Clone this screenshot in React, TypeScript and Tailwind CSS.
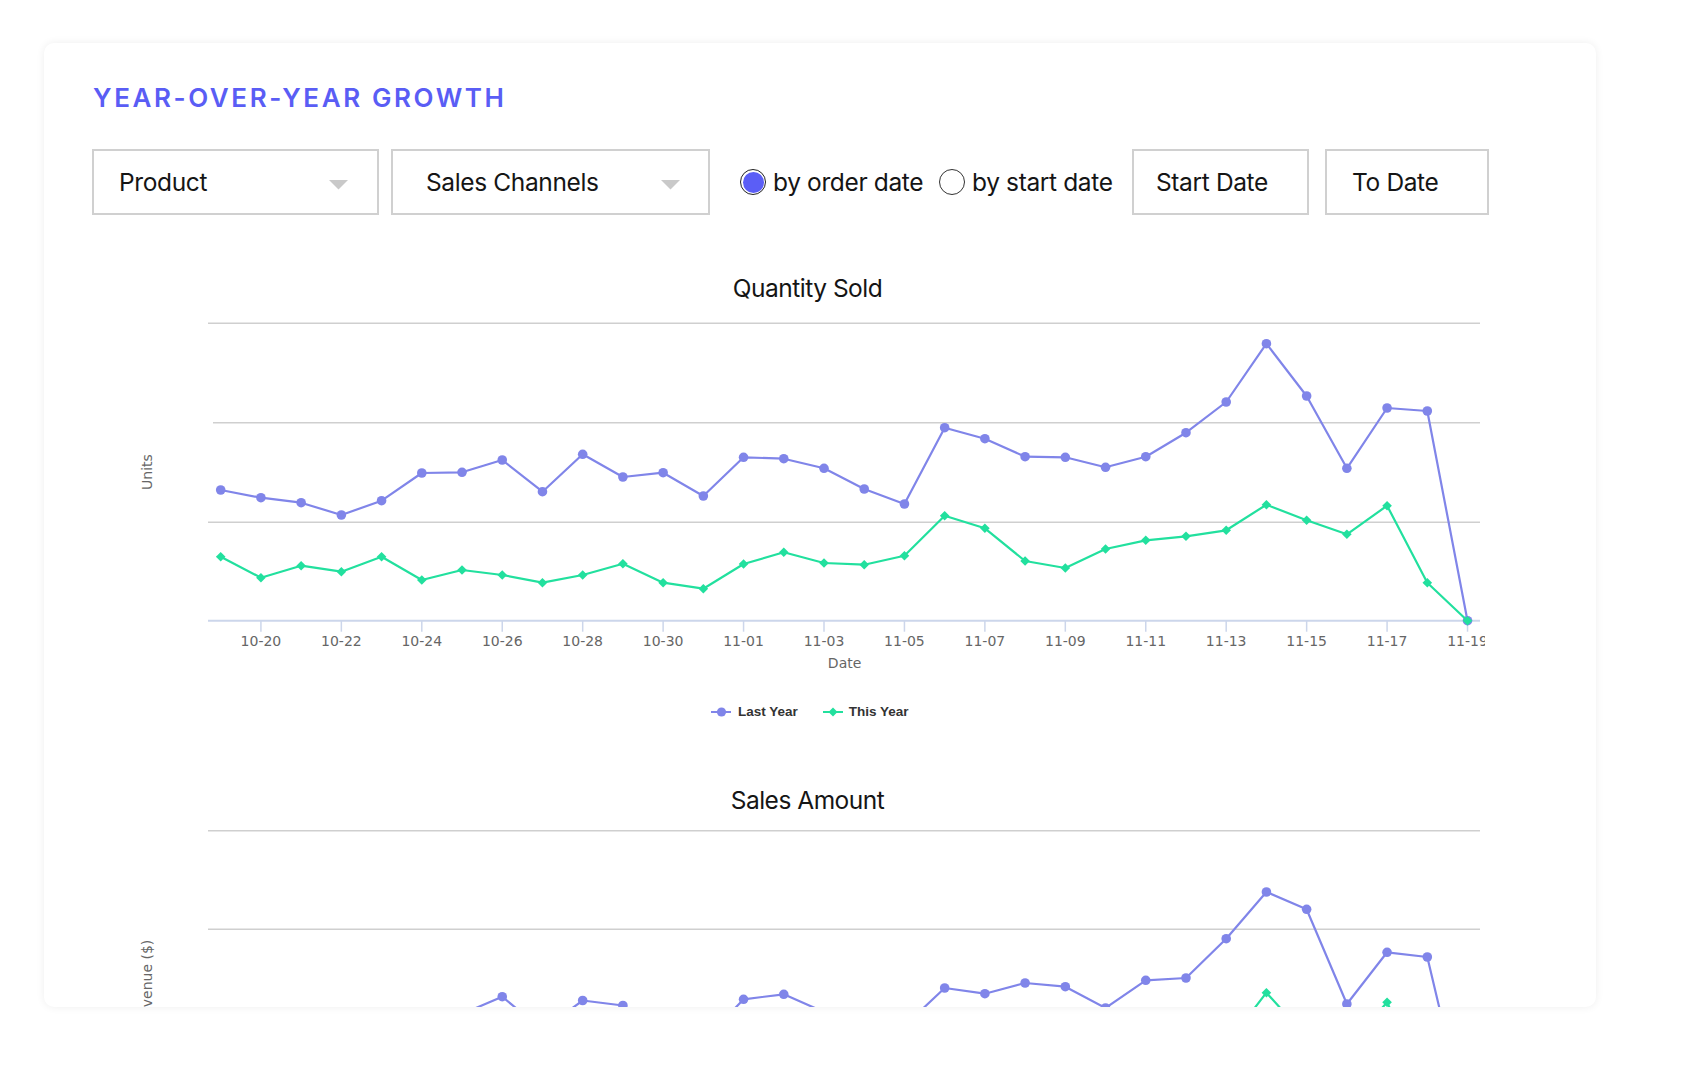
import React from 'react';

const uiFont = { fontFamily: 'Inter, "Noto Sans", sans-serif' };
const chartFont = '"DejaVu Sans", Verdana, sans-serif';

const PURPLE = '#8085e9';
const GREEN = '#22e09e';

// page-space y values measured per day, 10-19 .. 11-19
const qtyLast = [
    490, 497.7, 502.7, 515, 500.7, 473, 472.3, 460, 491.7, 454.3, 477, 472.7, 496, 457.3, 458.7, 468.3,
    489, 504, 427.7, 438.7, 456.7, 457.3, 467.3, 456.7, 432.7, 402, 343.7, 396, 468.3, 408, 411, 620.7,
];
const qtyThis = [
    556.7, 577.7, 565.7, 571.7, 556.7, 580, 570, 575, 582.7, 575, 563.7, 582.7, 588.7, 564, 552.3, 563,
    564.7, 555.7, 515.7, 528.3, 561, 568, 549, 540.3, 536.3, 530.3, 504.7, 520.3, 534.3, 505.7, 582.7, 620.7,
];
const amtLast = [
    1045, 1052, 1048, 1060, 1040, 1030, 1014, 996.7, 1030, 1000.5, 1005.5, 1040, 1041, 999.3, 994.3, 1012,
    1035, 1026, 988, 993.7, 983, 986.7, 1008, 980.3, 978, 938.7, 892, 909.3, 1004, 952.3, 957, 1126.5,
];
const amtThis = [
    1075, 1085, 1080, 1082, 1075, 1088, 1084, 1086, 1090, 1086, 1080, 1090, 1092, 1080, 1072, 1078,
    1080, 1075, 1050, 1058, 1076, 1080, 1070, 1065, 1062, 1045, 992.7, 1037, 1048, 1002.3, 1090, 1126.5,
];

const dayLabels = [
    '10-20', '10-22', '10-24', '10-26', '10-28', '10-30', '11-01', '11-03',
    '11-05', '11-07', '11-09', '11-11', '11-13', '11-15', '11-17', '11-19',
];

const px = (i: number) => 90.7 + i * 40.22;

type Grid = { y: number; x1: number };

type ChartProps = {
    top: number;
    height: number;
    last: number[];
    current: number[];
    grid: Grid[];
    axis: number;
    yTitle: string;
    yTitleY: number;
    showXAxis?: boolean;
};

const Chart = ({ top, height, last, current, grid, axis, yTitle, yTitleY, showXAxis = true }: ChartProps) => {
    const path = (vals: number[]) =>
        vals.map((v, i) => `${i === 0 ? 'M' : 'L'}${px(i).toFixed(1)} ${(v - top).toFixed(1)}`).join(' ');
    const ax = axis - top;

    return (
        <svg width="1355" height={height} className="block">
            {grid.map((g) => (
                <line key={g.y} x1={g.x1} x2={1350} y1={g.y - top} y2={g.y - top} stroke="#cfcfcf" strokeWidth="1.6" />
            ))}
            {showXAxis && (
                <>
                    <line x1={78} x2={1350} y1={ax} y2={ax} stroke="#ccd6eb" strokeWidth="2" />
                    {dayLabels.map((d, k) => {
                        const x = px(1 + k * 2);
                        return (
                            <g key={d}>
                                <line x1={x} x2={x} y1={ax} y2={ax + 11} stroke="#ccd6eb" strokeWidth="1.5" />
                                <text
                                    x={x}
                                    y={ax + 25}
                                    textAnchor="middle"
                                    fontSize="14"
                                    fill="#666"
                                    fontFamily={chartFont}
                                >
                                    {d}
                                </text>
                            </g>
                        );
                    })}
                    <text x={714.6} y={ax + 47.6} textAnchor="middle" fontSize="14" fill="#666" fontFamily={chartFont}>
                        Date
                    </text>
                </>
            )}
            <text
                x={22}
                y={yTitleY}
                transform={`rotate(-90 22 ${yTitleY})`}
                textAnchor="middle"
                fontSize="14"
                fill="#666"
                fontFamily={chartFont}
            >
                {yTitle}
            </text>

            <path d={path(last)} fill="none" stroke={PURPLE} strokeWidth="2.2" strokeLinejoin="round" />
            {last.map((v, i) => (
                <circle key={i} cx={px(i)} cy={v - top} r="4.8" fill={PURPLE} />
            ))}

            <path d={path(current)} fill="none" stroke={GREEN} strokeWidth="2.2" strokeLinejoin="round" />
            {current.map((v, i) => {
                const x = px(i);
                const y = v - top;
                return (
                    <polygon
                        key={i}
                        points={`${x},${y - 4.8} ${x + 4.8},${y} ${x},${y + 4.8} ${x - 4.8},${y}`}
                        fill={GREEN}
                    />
                );
            })}
        </svg>
    );
};

const Caret = () => (
    <svg width="19" height="10" viewBox="0 0 19 10" className="mt-[5px] shrink-0">
        <polygon points="0,0 19,0 9.5,9.5" fill="#c9c9c9" />
    </svg>
);

const Legend = () => (
    <div
        className="ml-[581px] mt-[19px] flex h-[20px] items-center text-[13.5px] font-bold text-[#333]"
        style={{ fontFamily: '"Liberation Sans", Arial, sans-serif' }}
    >
        <svg width="20" height="12" className="shrink-0">
            <line x1="0" x2="20" y1="6" y2="6" stroke={PURPLE} strokeWidth="2" />
            <circle cx="10.5" cy="6" r="4.6" fill={PURPLE} />
        </svg>
        <span className="ml-[7px]">Last Year</span>
        <svg width="20" height="12" className="ml-[25px] shrink-0">
            <line x1="0" x2="20" y1="6" y2="6" stroke={GREEN} strokeWidth="2" />
            <polygon points="10,1.5 14.5,6 10,10.5 5.5,6" fill={GREEN} />
        </svg>
        <span className="ml-[6px]">This Year</span>
    </div>
);

export default function App() {
    return (
        <div className="min-h-screen w-full bg-white pl-[44px] pt-[43px]" style={uiFont}>
            <div className="h-[964px] w-[1552px] overflow-hidden rounded-[10px] bg-white shadow-[0_0_8px_rgba(0,0,0,0.07)]">
                <div className="pl-[48px] pt-[39px]">
                    <h1 className="pl-[1px] text-[26px] font-semibold leading-[32px] tracking-[0.1em] text-[#5a5df5]">
                        YEAR-OVER-YEAR GROWTH
                    </h1>

                    <div className="mt-[35px] flex h-[66px] items-center text-[24.5px] tracking-[-0.015em] text-[#151515]">
                        <div className="flex h-full w-[287px] items-center justify-between border-2 border-[#d0d0d0] pl-[25px] pr-[29px]">
                            <span>Product</span>
                            <Caret />
                        </div>
                        <div className="ml-[12px] flex h-full w-[319px] items-center justify-between border-2 border-[#d0d0d0] pl-[33px] pr-[28px]">
                            <span>Sales Channels</span>
                            <Caret />
                        </div>

                        <label className="ml-[30px] flex w-[199px] items-center">
                            <span className="flex h-[26px] w-[26px] shrink-0 items-center justify-center rounded-full border border-[#222] bg-white">
                                <span className="h-[21px] w-[21px] rounded-full bg-[#5b5ef6]" />
                            </span>
                            <span className="ml-[7px] whitespace-nowrap">by order date</span>
                        </label>
                        <label className="flex w-[193px] items-center">
                            <span className="h-[26px] w-[26px] shrink-0 rounded-full border border-[#333] bg-white" />
                            <span className="ml-[7px] whitespace-nowrap">by start date</span>
                        </label>

                        <div className="flex h-full w-[177px] items-center border-2 border-[#d0d0d0] pl-[22px]">
                            Start Date
                        </div>
                        <div className="ml-[16px] flex h-full w-[164px] items-center border-2 border-[#d0d0d0] pl-[25px]">
                            To Date
                        </div>
                    </div>
                </div>

                <div className="ml-[86px] mt-[58px] w-[1355px]">
                    <h2 className="text-center text-[24.5px] leading-[30px] tracking-[-0.02em] text-[#151515]">
                        Quantity Sold
                    </h2>
                    <Chart
                        top={303}
                        height={380}
                        last={qtyLast}
                        current={qtyThis}
                        grid={[
                            { y: 323.3, x1: 78 },
                            { y: 422.7, x1: 83 },
                            { y: 522.3, x1: 78 },
                        ]}
                        axis={620.7}
                        yTitle="Units"
                        yTitleY={169}
                    />
                    <Legend />

                    <h2 className="mt-[63px] text-center text-[24.5px] leading-[30px] tracking-[-0.02em] text-[#151515]">
                        Sales Amount
                    </h2>
                    <Chart
                        top={815}
                        height={192}
                        last={amtLast}
                        current={amtThis}
                        grid={[
                            { y: 830.7, x1: 78 },
                            { y: 929.3, x1: 78 },
                        ]}
                        axis={1126.5}
                        yTitle="Revenue ($)"
                        yTitleY={167.3}
                        showXAxis={false}
                    />
                </div>
            </div>
        </div>
    );
}
